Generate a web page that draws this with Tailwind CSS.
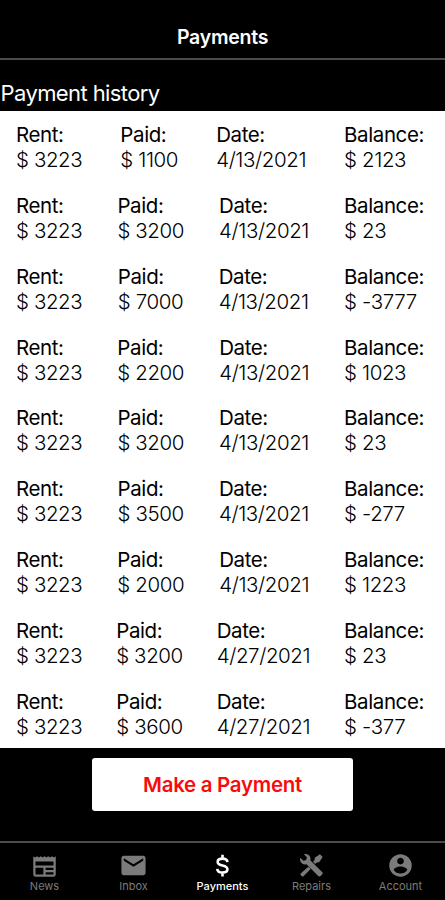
<!DOCTYPE html>
<html lang="en">
<head>
<meta charset="utf-8">
<title>Payments</title>
<script src="https://cdn.jsdelivr.net/npm/@tailwindcss/browser@4"></script>
</head>
<body class="bg-black">
<div class="flex h-[900px] w-[445px] flex-col overflow-hidden bg-black font-['Inter',sans-serif] text-white">
  <header class="flex h-[60px] shrink-0 items-end justify-center border-b-2 border-[#4b4b4b] pb-[9px]">
    <h1 class="text-[19.5px] leading-6 font-semibold tracking-[-0.25px]">Payments</h1>
  </header>
  <h2 class="flex h-[51px] shrink-0 items-end pb-[3px] pl-[0.5px] text-[22px] leading-[30px] tracking-[-0.6px]">Payment history</h2>
  <main id="rows" class="h-[637px] shrink-0 bg-white pt-[11px] text-[20.5px] leading-[25px] text-black"></main>
  <div class="flex h-[95px] shrink-0 justify-center border-b-2 border-[#4b4b4b] pt-[10px]">
    <button class="h-[53px] w-[261px] rounded-[3px] bg-white pt-[2px] text-[20.5px] font-semibold tracking-[-0.3px] text-[#f90b0b]">Make a Payment</button>
  </div>
  <nav class="grid flex-1 grid-cols-5 pt-[9px] text-[11px] leading-[14px] text-[#7b7b7b]">
    <a class="flex flex-col items-center"><svg class="h-[27px] w-[27px]" viewBox="0 0 24 24" fill="currentColor"><path fill-rule="evenodd" d="M22 3.8l-1.67 1L18.67 3.8 17 4.8l-1.67-1-1.66 1L12 3.8l-1.67 1L8.67 3.8 7 4.8l-1.67-1-1.66 1L2 3.8V20c0 1.1.9 2 2 2h16c1.1 0 2-.9 2-2V3.8zM11 20H4v-6h7v6zm9 0h-7v-2h7v2zm0-4h-7v-2h7v2zm0-4H4V8.5h16V12z"/></svg>News</a>
    <a class="flex flex-col items-center"><svg class="-mt-px -mb-px h-[29px] w-[29px]" viewBox="0 0 24 24" fill="currentColor"><path d="M20 4H4c-1.1 0-2 .9-2 2v12c0 1.1.9 2 2 2h16c1.1 0 2-.9 2-2V6c0-1.1-.9-2-2-2zm0 4l-8 5-8-5V6l8 5 8-5v2z"/></svg>Inbox</a>
    <a class="flex flex-col items-center font-medium text-white"><svg class="h-[27px] w-[27px]" viewBox="0 0 24 24" fill="none" stroke="currentColor" stroke-width="2.3"><path d="M16.4 9C16.2 7.1 14.5 5.9 12 5.9 9.5 5.9 7.7 7 7.7 8.8 7.7 10.7 9.5 11.4 12 12 14.5 12.6 16.4 13.4 16.4 15.4 16.4 17.1 14.7 18.3 12 18.3 9.2 18.3 7.5 17 7.3 15M12 2.4V6M12 18V21.7"/></svg>Payments</a>
    <a class="flex flex-col items-center"><svg class="h-[27px] w-[27px]" viewBox="0 0 24 24" fill="currentColor"><path d="M2.1 5.2 4.7 7.8 7.3 7.2 7.9 4.6 5.3 2C7.4 1.2 9.6 2 10.6 3.9 11.2 5 11.3 6.2 10.9 7.4L21.6 18.1C22.1 18.6 22.1 19.2 21.6 19.7L19.8 21.5C19.3 22 18.7 22 18.2 21.5L7.5 10.8C5.8 11.4 3.9 10.9 2.8 9.4 1.9 8.2 1.6 6.6 2.1 5.2Z"/><path d="M19.5 2.1 21.9 4.5 18.8 9.1 16.7 9.3 15.3 10.7 13.3 8.7 14.7 7.3 14.9 5.2ZM9.2 13 11.3 15.1 4.8 21.6C4.4 22 3.9 22 3.5 21.6L2.4 20.5C2 20.1 2 19.6 2.4 19.2Z"/></svg>Repairs</a>
    <a class="flex flex-col items-center"><svg class="h-[27px] w-[27px]" viewBox="0 0 24 24" fill="currentColor"><path d="M12 2C6.48 2 2 6.48 2 12s4.48 10 10 10 10-4.48 10-10S17.52 2 12 2zm0 3c1.66 0 3 1.34 3 3s-1.34 3-3 3-3-1.34-3-3 1.34-3 3-3zm0 14.2c-2.5 0-4.71-1.28-6-3.22.03-1.99 4-3.08 6-3.08 1.99 0 5.97 1.09 6 3.08-1.29 1.94-3.5 3.22-6 3.22z"/></svg>Account</a>
  </nav>
</div>
<script>
const payments = [
  ["1100", "4/13/2021", "2123"], ["3200", "4/13/2021", "23"], ["7000", "4/13/2021", "-3777"],
  ["2200", "4/13/2021", "1023"], ["3200", "4/13/2021", "23"], ["3500", "4/13/2021", "-277"],
  ["2000", "4/13/2021", "1223"], ["3200", "4/27/2021", "23"], ["3600", "4/27/2021", "-377"]
];
const cell = (label, value) => `<div><div class="tracking-[-0.4px]">${label}:</div><div class="font-light tracking-[-0.4px]">${value}</div></div>`;
document.getElementById("rows").innerHTML = payments.map(([paid, date, balance]) =>
  `<section class="flex h-[70.85px] justify-between pr-[21px] pl-4">${cell("Rent", "$ 3223")}${cell("Paid", "$ " + paid)}${cell("Date", date)}${cell("Balance", "$ " + balance)}</section>`).join("");
</script>
</body>
</html>
